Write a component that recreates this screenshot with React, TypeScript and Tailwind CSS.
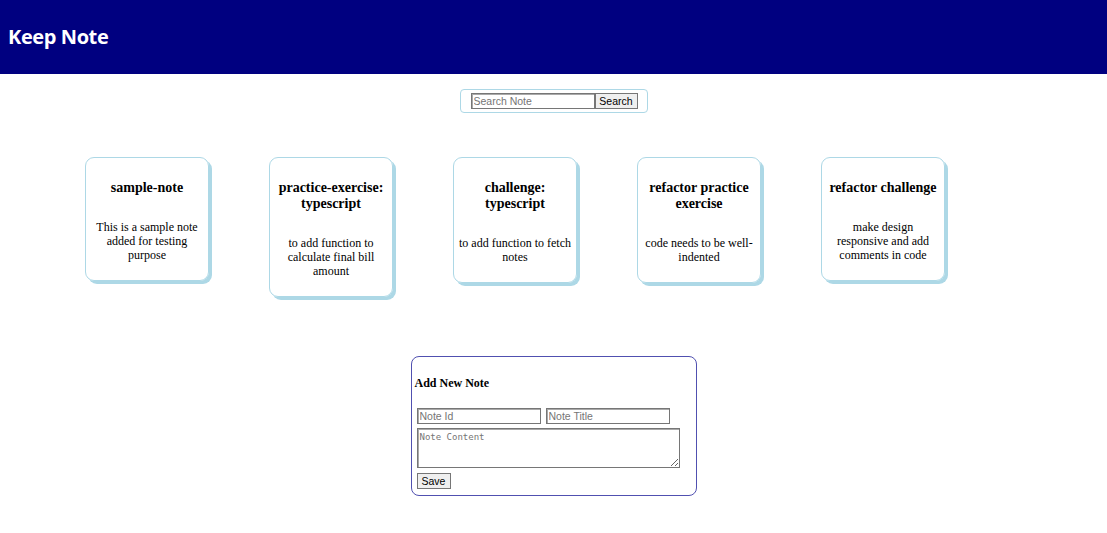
import { useState } from "react";

type Note = { id: string; title: string; content: string };

const initialNotes: Note[] = [
  { id: "1", title: "sample-note", content: "This is a sample note added for testing purpose" },
  { id: "2", title: "practice-exercise: typescript", content: "to add function to calculate final bill amount" },
  { id: "3", title: "challenge: typescript", content: "to add function to fetch notes" },
  { id: "4", title: "refactor practice exercise", content: "code needs to be well-indented" },
  { id: "5", title: "refactor challenge", content: "make design responsive and add comments in code" },
];

export default function App() {
  const [notes, setNotes] = useState<Note[]>(initialNotes);
  const [query, setQuery] = useState("");
  const [draft, setDraft] = useState({ id: "", title: "", content: "" });

  const save = () => {
    if (!draft.title) return;
    setNotes([...notes, draft]);
    setDraft({ id: "", title: "", content: "" });
  };

  return (
    <div className="min-h-[533px] bg-white font-['Liberation_Serif',serif] text-black">
      <header className="flex h-[74px] items-center bg-[#000080] pl-2">
        <h1 className="font-['Open_Sans',sans-serif] text-[20px] font-bold tracking-[-0.4px] text-white">Keep Note</h1>
      </header>

      <div className="mt-[15px] flex justify-center">
        <div className="flex h-[24px] items-center rounded-[4px] border border-[#add8e6] pl-[10px] pr-[9px]">
          <input
            value={query}
            onChange={(e) => setQuery(e.target.value)}
            placeholder="Search Note"
            className="h-[16px] w-[124px] border border-[#767676] px-[2px] font-['Liberation_Sans',sans-serif] text-[10.5px] placeholder:text-[#757575] shadow-[inset_1px_1px_0_#a9a9a9] outline-none"
          />
          <button className="h-[16px] w-[43px] border border-[#767676] bg-[#efefef] font-['Liberation_Sans',sans-serif] text-[10.5px] leading-none">Search</button>
        </div>
      </div>

      <div className="mt-[44px] flex items-start gap-[60px] pl-[85px]">
        {notes.map((note) => (
          <NoteCard key={note.id} note={note} />
        ))}
      </div>

      <div className="mt-[59px] flex justify-center">
        <div className="w-[286px] rounded-[8px] border border-[#5050b0] pb-[6px] pl-[3px] pt-[19px]">
          <h4 className="text-[12px] font-bold leading-[14px]">Add New Note</h4>
          <div className="mt-[18px] flex flex-col gap-[4px] pl-[2px]">
            <div className="flex gap-[5px]">
              <Field placeholder="Note Id" value={draft.id} onChange={(v) => setDraft({ ...draft, id: v })} />
              <Field placeholder="Note Title" value={draft.title} onChange={(v) => setDraft({ ...draft, title: v })} />
            </div>
            <textarea
              value={draft.content}
              onChange={(e) => setDraft({ ...draft, content: e.target.value })}
              placeholder="Note Content"
              className="block h-[40px] w-[263px] border border-[#767676] px-[2px] pt-[2px] font-['DejaVu_Sans_Mono',monospace] text-[9px] leading-[12px] placeholder:text-[#757575] shadow-[inset_1px_1px_0_#a9a9a9] outline-none"
            />
            <div className="mt-[1px] flex">
              <button onClick={save} className="h-[16px] w-[34px] border border-[#767676] bg-[#efefef] font-['Liberation_Sans',sans-serif] text-[10.5px] leading-none">Save</button>
            </div>
          </div>
        </div>
      </div>
    </div>
  );
}

function NoteCard({ note }: { note: Note }) {
  return (
    <div className="w-[124px] rounded-[9px] border border-[#add8e6] px-[5px] pb-[18px] pt-[22px] text-center shadow-[3px_3px_0_#add8e6]">
      <h3 className="text-[14px] font-bold leading-[16px]">{note.title}</h3>
      <p className="mt-[24px] text-[12px] leading-[14px]">{note.content}</p>
    </div>
  );
}

function Field({ placeholder, value, onChange }: { placeholder: string; value: string; onChange: (v: string) => void }) {
  return (
    <input
      value={value}
      onChange={(e) => onChange(e.target.value)}
      placeholder={placeholder}
      className="h-[16px] w-[124px] border border-[#767676] px-[2px] font-['Liberation_Sans',sans-serif] text-[10.5px] placeholder:text-[#757575] shadow-[inset_1px_1px_0_#a9a9a9] outline-none"
    />
  );
}
